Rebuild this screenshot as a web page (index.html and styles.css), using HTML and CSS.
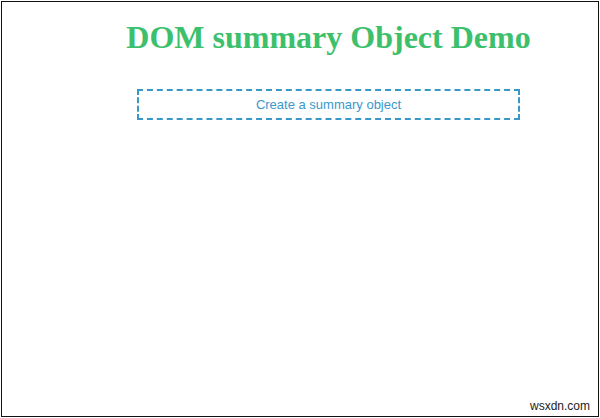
FILE: index.html
```html
<!DOCTYPE html>
<html>
<head>
<meta charset="utf-8">
<link rel="stylesheet" href="styles.css">
</head>
<body>
<div class="frame">
  <div class="content">
    <h1 class="title">DOM summary Object Demo</h1>
    <div class="summary-box">Create a summary object</div>
  </div>
  <div class="spacer"></div>
  <div class="watermark">wsxdn.com</div>
</div>
</body>
</html>
```
FILE: styles.css
```css
html, body {
  margin: 0;
  padding: 0;
  background: #fff;
}
.frame {
  box-sizing: border-box;
  margin: 1px;
  width: 598px;
  height: 416px;
  border: 1px solid #111;
  display: flex;
  flex-direction: column;
  padding: 0 8px 3px 135px;
}
.content {
  width: 383px;
  display: flex;
  flex-direction: column;
  align-items: center;
}
.title {
  margin: 17px -30px 0 -30px;
  font-family: "Liberation Serif", serif;
  font-weight: bold;
  font-size: 32px;
  line-height: 37px;
  color: #3cc06c;
  text-align: center;
  white-space: nowrap;
}
.summary-box {
  box-sizing: border-box;
  margin-top: 33px;
  width: 383px;
  height: 31px;
  border: 2px dashed #3a98c8;
  font-family: "Liberation Sans", Arial, sans-serif;
  font-size: 13px;
  color: #3a98cc;
  display: flex;
  align-items: center;
  justify-content: center;
}
.spacer {
  flex: 1;
}
.watermark {
  align-self: flex-end;
  font-family: "Liberation Sans", Arial, sans-serif;
  font-size: 12px;
  color: #222;
  line-height: 14px;
}
```
